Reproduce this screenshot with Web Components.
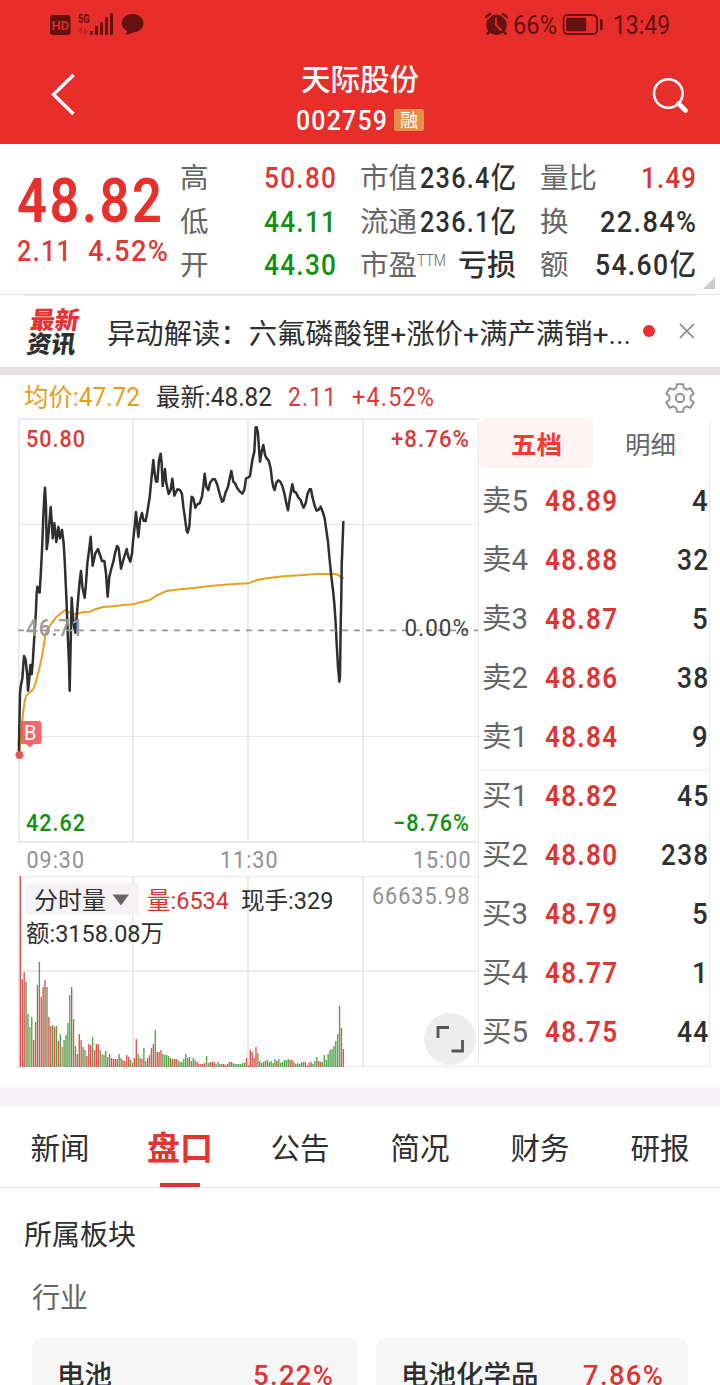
<!DOCTYPE html>
<html lang="zh-CN">
<head>
<meta charset="utf-8">
<title>天际股份 002759</title>
<style>
html,body{
    margin:0;
    background:#FFF;
}
body{
    width:720px;
    height:1385px;
    overflow:hidden;
    color:#2F2F2F;
    font-family: Roboto, "Noto Sans CJK SC", sans-serif;
}
</style>
</head>
<body>
<stock-page></stock-page>

<script>
// every element gets its own open shadow root
class BaseElement extends HTMLElement{
    constructor(){
        super();
        this.attachShadow({mode:'open'});
    }
    connectedCallback(){
        this.shadowRoot.innerHTML = this.render();
    }
}

class StatusBar extends BaseElement{
    render(){
        return `
<style>
:host{
    display:flex;
    justify-content:space-between;
    align-items:center;
    height:48px;
    padding:0 50px;
    color:#641210;
    font-size:25px;
    font-weight:400;
    box-sizing:border-box;
}
.side{
    display:flex;
    align-items:center;
}
svg{
    display:block;
}
text{
    font-family:Roboto, sans-serif;
}
.time{
    margin-left:10px;
}
fit-text{
    margin-top:2px;
}
</style>
<div class="side">
    <svg width="96" height="28" viewBox="50 10 96 28">
        <rect x="50" y="15" width="20.5" height="20" rx="3" fill="#641210"/>
        <text x="51.800" y="30" font-size="13.5" font-weight="500" fill="#E72E2B" textLength="17" lengthAdjust="spacingAndGlyphs">HD</text>
        <text x="78" y="22.6" font-size="13" font-weight="700" fill="#641210" textLength="11.5" lengthAdjust="spacingAndGlyphs">5G</text>
        <g fill="#641210">
            <rect x="90" y="31" width="3" height="4" rx="1"/>
            <rect x="95" y="26" width="3" height="9" rx="1"/>
            <rect x="100" y="22" width="3" height="13" rx="1"/>
            <rect x="105" y="17" width="3" height="18" rx="1"/>
            <rect x="110" y="13" width="3" height="22" rx="1"/>
            <path d="M132.500 14c6 0 11 4 11 9.200 0 5-4.500 8.800-10.500 9-2 1.500-4.500 2.200-7.800 2 1.200-.9 1.800-2 1.900-3.200-3.300-1.600-5.500-4.500-5.500-7.800 0-5.200 5-9.200 10.900-9.200z"/>
        </g>
        <path d="M81.500 34v-6l-3 3.200M85 28v6l3-3.200" fill="none" stroke="#641210" stroke-opacity=".35" stroke-width="1.600"/>
    </svg>
</div>
<div class="side">
    <svg width="30" height="28" viewBox="483 10 30 28">
        <circle cx="496.500" cy="24.700" r="10.300" fill="#641210"/>
        <path d="M486 17.500l4-3.500M507 17.500l-4-3.500" stroke="#E72E2B" stroke-width="5.500"/>
        <path d="M486 17l4-3M507 17l-4-3" stroke="#641210" stroke-width="2.600" stroke-linecap="round"/>
        <path d="M490 31l-2.500 2.500M503 31l2.500 2.500" stroke="#641210" stroke-width="2.600" stroke-linecap="round"/>
        <path d="M496 18.500v6.500l5 5" fill="none" stroke="#E72E2B" stroke-width="1.800" stroke-linecap="round"/>
    </svg>
    <fit-text w="44">66%</fit-text>
    <svg width="46" height="28" viewBox="557.500 10 46 28">
        <rect x="564" y="15" width="33.500" height="19" rx="4" fill="none" stroke="#641210" stroke-width="1.800"/>
        <rect x="566.700" y="17.700" width="20" height="13.600" rx="1.500" fill="#641210"/>
        <rect x="600.500" y="19" width="2.700" height="11" rx="1.300" fill="#641210"/>
    </svg>
    <fit-text class="time" w="57">13:49</fit-text>
</div>
`;
    }
}
customElements.define('status-bar',StatusBar);

class TitleBar extends BaseElement{
    render(){
        return `
<style>
:host{
    display:grid;
    grid-template-columns:120px 1fr 120px;
    height:96px;
    color:#FFF;
}
.name{
    margin-top:13px;
    height:38px;
    line-height:38px;
    text-align:center;
    font-size:29.5px;
    font-weight:500;
}
.code{
    display:flex;
    align-items:center;
    padding-left:176px;
    height:44px;
    margin-top:-1px;
    font-size:28px;
    font-weight:500;
    line-height:44px;
}
.code fit-text{
    padding-top:2px;
}
.badge{
    width:30px;
    height:22px;
    margin-left:7px;
    border-radius:2px;
    background:#E78E48;
    font-size:18px;
    line-height:23px;
    font-weight:400;
    text-align:center;
}
svg{
    display:block;
}
</style>
<svg width="120" height="96" viewBox="0 48 120 96">
    <path d="M73.500 75L53.500 94.500L73.500 114" fill="none" stroke="#FFF" stroke-width="3.400"/>
</svg>
<div>
    <div class="name"><slot name="name"></slot></div>
    <div class="code"><fit-text w="91" spaced><slot name="code"></slot></fit-text><span class="badge"><slot name="badge"></slot></span></div>
</div>
<svg width="120" height="96" viewBox="600 48 120 96">
    <circle cx="668.300" cy="93.500" r="14.300" fill="none" stroke="#FFF" stroke-width="2.600"/>
    <path d="M678.500 103.500L685.500 110.500" stroke="#FFF" stroke-width="4.600" stroke-linecap="round"/>
</svg>
`;
    }
}
customElements.define('title-bar',TitleBar);

class QuoteItem extends BaseElement{
    render(){
        const color = this.getAttribute('color') || '#2F2F2F';
        const sup = this.getAttribute('sup') || '';
        return `
<style>
:host{
    display:flex;
    justify-content:space-between;
    align-items:center;
    height:43.5px;
    line-height:43.5px;
}
.label{
    color:#666;
    font-size:28.5px;
    margin-left:-1px;
}
.sup{
    display:inline-block;
    font-size:17px;
    font-weight:300;
    line-height:20px;
    vertical-align:9px;
}
.value{
    color:${color};
    font-size:29.5px;
    font-weight:500;
}
</style>
<span class="label">${this.getAttribute('label')}${sup ? `<fit-text class="sup" w="29">${sup}</fit-text>` : ''}</span>
<fit-text class="value" w="${this.getAttribute('w')}" ${this.hasAttribute('plain') ? '' : 'spaced'}><slot></slot></fit-text>
`;
    }
}
customElements.define('quote-item',QuoteItem);

class QuotePanel extends BaseElement{
    render(){
        return `
<style>
:host{
    display:grid;
    grid-template-columns:164px 155px 25px 155px 25px 155px;
    grid-auto-rows:43.5px;
    height:151px;
    padding:13px 0 0 17px;
    box-sizing:border-box;
    border-bottom:1px solid #E2E0E2;
    position:relative;
}
.now{
    grid-row:1 / 4;
    color:#E72F2C;
}
.price{
    height:88px;
    line-height:88px;
    font-size:61.5px;
    font-weight:600;
}
.change{
    display:flex;
    gap:17px;
    height:18px;
    line-height:12px;
    font-size:30px;
    font-weight:500;
    color:#DB3B38;
}
.c2{
    grid-column:4;
}
.c3{
    grid-column:6;
}
.corner{
    position:absolute;
    right:5px;
    bottom:5px;
    width:12px;
    height:12px;
    background:#CCC;
    clip-path:polygon(100% 0,100% 100%,0 100%);
}
</style>
<div class="now">
    <div class="price"><fit-text w="145" spaced>48.82</fit-text></div>
    <div class="change"><fit-text w="54" spaced>2.11</fit-text><fit-text w="80" spaced>4.52%</fit-text></div>
</div>
<quote-item label="高" w="72" color="#DB3B38">50.80</quote-item>
<quote-item class="c2" label="市值" w="96">236.4亿</quote-item>
<quote-item class="c3" label="量比" w="55" color="#DB3330">1.49</quote-item>
<quote-item label="低" w="72" color="#109010">44.11</quote-item>
<quote-item class="c2" label="流通" w="96">236.1亿</quote-item>
<quote-item class="c3" label="换" w="96">22.84%</quote-item>
<quote-item label="开" w="72" color="#109010">44.30</quote-item>
<quote-item class="c2" label="市盈" sup="TTM" w="58" plain>亏损</quote-item>
<quote-item class="c3" label="额" w="101">54.60亿</quote-item>
<div class="corner"></div>
`;
    }
}
customElements.define('quote-panel',QuotePanel);

class NewsRow extends BaseElement{
    render(){
        return `
<style>
:host{
    display:flex;
    align-items:center;
    height:72px;
    box-sizing:border-box;
    padding:1px 24px 0;
    background:linear-gradient(#ECEAEC,#ECEAEC) 24px 0 / 672px 1px no-repeat;
}
.logo{
    width:51px;
    margin:-3px 0 0 5px;
    font-family:"Noto Sans CJK SC", sans-serif;
    font-size:24.5px;
    font-weight:900;
    line-height:23.5px;
    transform:skewX(-8deg);
}
.logo .top{
    color:#E33431;
}
.text{
    margin:6px 0 0 28px;
    font-size:28px;
    line-height:40px;
}
.dot{
    width:12px;
    height:12px;
    margin:-1px 0 0 12px;
    border-radius:50%;
    background:#EB2F2F;
}
svg{
    margin:-1px 0 0 23px;
}
</style>
<div class="logo"><div class="top">最新</div><div>资讯</div></div>
<div class="text"><fit-text w="524"><slot></slot></fit-text></div>
<div class="dot"></div>
<svg width="18" height="18" viewBox="0 0 18 18"><path d="M2 2L16 16M16 2L2 16" stroke="#8E8E8E" stroke-width="1.700"/></svg>
`;
    }
}
customElements.define('news-row',NewsRow);

class InfoRow extends BaseElement{
    gear(){
        let pts = [];
        for(let k=0;k<6;k++){
            [[-20,10.8],[-13,14.3],[13,14.3],[20,10.8]].forEach(([a,r])=>{
                const t = (k*60 + a - 90) * Math.PI / 180;
                pts.push((16 + r*Math.cos(t)).toFixed(1) + ',' + (16 + r*Math.sin(t)).toFixed(1));
            });
        }
        return pts.join(' ');
    }
    render(){
        return `
<style>
:host{
    display:flex;
    align-items:center;
    height:43px;
    padding:2px 24px 0;
    box-sizing:border-box;
    font-size:25px;
    line-height:40px;
}
.avg{
    color:#E3A01C;
}
.last{
    margin-left:16px;
}
.red{
    color:#D93A38;
    margin-left:16px;
}
svg{
    margin-left:auto;
}
</style>
<fit-text class="avg" w="116">均价:47.72</fit-text>
<fit-text class="last" w="116">最新:48.82</fit-text>
<fit-text class="red" w="48" spaced>2.11</fit-text>
<fit-text class="red" w="82" spaced>+4.52%</fit-text>
<svg width="32" height="32" viewBox="0 0 32 32" fill="none" stroke="#919191" stroke-width="1.900" stroke-linejoin="round">
    <polygon points="${this.gear()}"/>
    <circle cx="16" cy="16" r="4.200"/>
</svg>
`;
    }
}
customElements.define('info-row',InfoRow);

// price line and average line, three units per pixel
const PRICE = '57,1034 57,1000 60,850 62,830 67,805 72,738 77,750 82,800 84,842 87,815 91,765 95,793 98,760 103,680 108,600 110,550 112,530 116,545 119,548 123,480 127,400 130,320 133,260 135,233 138,290 140,418 144,390 148,340 152,291 155,330 158,385 163,340 169,396 175,351 180,385 186,360 191,400 194,450 199,560 204,690 207,760 209,842 212,700 215,563 218,610 222,650 226,668 230,620 235,560 239,515 243,483 247,530 254,563 258,520 262,460 268,415 272,380 278,467 286,430 294,417 300,435 306,453 313,453 318,490 323,560 328,500 333,480 340,455 345,430 351,408 356,415 360,450 363,476 370,450 380,417 385,440 391,455 396,430 400,385 404,350 408,306 412,350 415,381 420,330 426,309 431,333 437,333 443,300 449,262 453,220 457,180 460,150 464,190 468,215 472,215 477,150 482,131 485,160 488,228 492,200 495,177 499,220 506,252 512,240 517,206 523,257 532,238 540,240 546,252 550,290 555,325 560,362 563,368 568,350 572,290 575,260 580,265 586,293 592,283 599,280 606,260 610,230 614,191 619,230 625,240 630,218 638,208 645,208 652,225 660,255 666,275 670,273 676,250 684,230 690,200 694,183 700,215 706,221 712,235 720,245 727,251 733,240 738,205 744,203 750,198 757,150 763,125 767,52 770,52 774,70 777,115 780,155 785,125 790,105 795,135 800,145 806,152 812,175 816,210 820,232 824,240 829,218 835,211 841,215 847,228 853,250 858,275 864,301 870,260 877,223 882,245 888,248 895,262 902,270 907,285 911,293 917,280 923,250 929,238 933,238 937,260 944,287 950,302 957,298 962,290 968,305 974,325 979,360 984,395 989,450 994,500 999,540 1003,580 1007,640 1010,700 1014,770 1018,815 1020,800 1022,650 1024,560 1025,470 1028,390 1030,336';
const AVERAGE = '57,1034 65,950 70,900 75,870 80,855 90,847 100,837 108,815 118,775 126,740 132,700 138,665 148,650 158,635 170,620 180,612 196,600 206,606 220,612 235,611 250,606 270,605 285,598 310,591 340,589 370,585 400,583 420,577 450,570 470,556 500,543 540,538 580,534 630,528 690,523 745,520 770,510 800,505 850,499 900,496 950,492 1005,492 1015,495 1022,502 1030,503';

class PriceChart extends BaseElement{
    render(){
        return `
<style>
:host{
    display:block;
    height:458px;
}
svg{
    display:block;
}
text{
    font-family:Roboto, sans-serif;
    font-size:23.5px;
    font-weight:500;
    letter-spacing:1.1px;
}
.axis text, .thin{
    font-weight:400;
}
</style>
<svg width="478" height="458" viewBox="0 418 478 458">
    <path d="M19 419V842M133 419V842M248 419V842M363 419V842M18 419H478M18 842H478" fill="none" stroke="#EBEBEB" stroke-width="2"/>
    <path d="M19 524.500H478M19 736.500H478" stroke="#E6E6E6" stroke-width="1"/>
    <g transform="translate(0 410) scale(.33333)" fill="none" stroke-linejoin="round" stroke-linecap="round">
        <polyline points="${AVERAGE}" stroke="#E6A020" stroke-width="6"/>
        <polyline points="${PRICE}" stroke="#2F2F2F" stroke-width="7.500"/>
    </g>
    <path d="M18 630.300H478" stroke="#999" stroke-width="1.800" stroke-dasharray="6 6"/>
    <text x="26" y="636" fill="#999" textLength="58" lengthAdjust="spacingAndGlyphs">46.71</text>
    <circle cx="19.500" cy="755" r="4" fill="#E15856"/>
    <path d="M22 721h17q2.500 0 2.500 2.500v18q0 2.500-2.500 2.500h-5l-4 3.500-4-3.500h-5v-23z" fill="#F0504E" fill-opacity=".85"/>
    <text x="24" y="740" fill="#FFF" style="font-size:20px;font-weight:400">B</text>
    <text x="26" y="447" fill="#D93A38" textLength="60" lengthAdjust="spacingAndGlyphs">50.80</text>
    <text x="391" y="447" fill="#D93A38" textLength="79" lengthAdjust="spacingAndGlyphs">+8.76%</text>
    <text class="thin" x="404.500" y="636" fill="#404040" textLength="65.500" lengthAdjust="spacingAndGlyphs">0.00%</text>
    <text x="26" y="831" fill="#109010" textLength="60" lengthAdjust="spacingAndGlyphs">42.62</text>
    <text x="393" y="831" fill="#109010" textLength="77" lengthAdjust="spacingAndGlyphs">−8.76%</text>
    <g class="axis" fill="#909090">
        <text x="26.500" y="868" textLength="58.500" lengthAdjust="spacingAndGlyphs">09:30</text>
        <text x="220" y="868" textLength="58.500" lengthAdjust="spacingAndGlyphs">11:30</text>
        <text x="413" y="868" textLength="58.500" lengthAdjust="spacingAndGlyphs">15:00</text>
    </g>
</svg>
`;
    }
}
customElements.define('price-chart',PriceChart);

// one entry per minute: colour and bar height
const VOLUME = 'r192 r88 r95 g85 g53 t40 g50 r27 r45 r82 g105 r70 r80 r87 g80 r50 r41 g42 r40 g41 r26 g33 t20 g27 g32 g44 g72 r80 g48 g21 r13 r33 r27 g20 g17 r11 r23 r22 g30 r17 r23 r23 g17 t13 g12 g16 g10 r13 r9 r8 r8 r8 g13 g9 r7 r6 r12 r10 g7 g4 r9 r28 g13 r9 r8 g19 g6 r9 r12 r19 r23 g37 r15 r15 r17 g13 g12 g12 g11 r9 g8 r8 r8 g7 g5 g5 g8 g13 g9 r10 g6 g9 g7 r5 r3 r3 r3 r4 g11 g4 r5 r5 r5 g3 g5 g3 r3 r3 r2 r3 r5 r5 g4 g3 g3 g3 g3 g4 g4 r9 r2 r17 r15 r9 r20 g14 g6 r4 r5 g6 g7 g5 g6 g4 g8 r6 g8 g4 g5 g7 g7 g8 r7 r7 g5 g3 g4 g3 g5 g5 r5 r2 r4 r5 g3 g6 g10 r6 r5 g5 g12 g7 g13 g17 g18 g21 g26 g33 g61 r39 r18';
const VOLUME_COLORS = {r:'#DD4F4F', g:'#4DA345', t:'#B98555'};

class VolumeChart extends BaseElement{
    bars(){
        return VOLUME.split(' ').map((v,i)=>{
            const h = Number(v.slice(1));
            return `<rect x="${(19.7 + i*1.9).toFixed(2)}" y="${1067 - h}" width="1.35" height="${h}" fill="${VOLUME_COLORS[v[0]]}"/>`;
        }).join('');
    }
    render(){
        return `
<style>
:host{
    display:block;
    height:192px;
}
svg{
    display:block;
}
text{
    font-family:Roboto, "Noto Sans CJK SC", sans-serif;
    font-size:23.5px;
    fill:#2F2F2F;
}
</style>
<svg width="478" height="192" viewBox="0 876 478 192">
    <path d="M19 876V1067M133 876V1067M248 876V1067M363 876V1067M18 876.500H478M18 971H478" fill="none" stroke="#EBEBEB" stroke-width="2"/>
    <path d="M18 1066.500H478" stroke="#E8E8E8"/>
    <rect x="26" y="883" width="113" height="32" rx="4" fill="#F5F1F5"/>
    ${this.bars()}
    <text x="34" y="908.500" textLength="72" lengthAdjust="spacingAndGlyphs">分时量</text>
    <path d="M112.500 894.500h16.500l-8 11z" fill="#666"/>
    <text x="147" y="908.500" style="fill:#DB3330" textLength="82" lengthAdjust="spacingAndGlyphs">量:6534</text>
    <text x="241" y="908.500" textLength="92.500" lengthAdjust="spacingAndGlyphs">现手:329</text>
    <text x="372" y="904" style="fill:#909090;letter-spacing:1.1px" textLength="98.500" lengthAdjust="spacingAndGlyphs">66635.98</text>
    <text x="26" y="941.500" textLength="138" lengthAdjust="spacingAndGlyphs">额:3158.08万</text>
    <circle cx="450" cy="1039" r="26" fill="#EDEDED"/>
    <path d="M438 1038V1027.500H449M462.500 1040V1051H451.500" fill="none" stroke="#555" stroke-width="2.800"/>
</svg>
`;
    }
}
customElements.define('volume-chart',VolumeChart);

class OrderRow extends BaseElement{
    render(){
        const size = this.getAttribute('size');
        return `
<style>
:host{
    display:flex;
    align-items:center;
    height:59px;
    padding-top:2px;
    box-sizing:border-box;
    line-height:57px;
}
.label{
    width:63px;
    margin-left:-1px;
    color:#666;
    font-size:29px;
}
.price{
    color:#DB3633;
    font-size:29.5px;
    font-weight:600;
}
.size{
    margin-left:auto;
    padding-right:1px;
    font-size:29px;
    font-weight:500;
}
</style>
<div class="label"><fit-text w="46">${this.getAttribute('label')}</fit-text></div>
<fit-text class="price" w="72" spaced>${this.getAttribute('price')}</fit-text>
<fit-text class="size" w="${size.length * 15.7}" spaced>${size}</fit-text>
`;
    }
}
customElements.define('order-row',OrderRow);

class OrderBook extends BaseElement{
    render(){
        return `
<style>
:host{
    display:block;
    height:649px;
    width:232px;
    box-sizing:border-box;
    border-left:1px solid #EBEBEB;
    border-right:1px solid #EBEBEB;
    border-bottom:1px solid #EBEBEB;
}
.tabs{
    display:grid;
    grid-template-columns:115px 115px;
    height:53px;
    line-height:54px;
    text-align:center;
    font-size:25.5px;
    color:#666;
}
.active{
    height:50px;
    border-radius:7px;
    background:#FFF4F4;
    color:#F23A31;
    font-weight:700;
}
.tabs div + div{
    margin-left:-2px;
}
.rows{
    padding:0 0 0 4px;
}
hr{
    margin:3px 0 -5px -4px;
    border:0;
    height:2px;
    background:#F3F3F3;
}
</style>
<div class="tabs"><div class="active">五档</div><div>明细</div></div>
<div class="rows">
    <order-row label="卖5" price="48.89" size="4"></order-row>
    <order-row label="卖4" price="48.88" size="32"></order-row>
    <order-row label="卖3" price="48.87" size="5"></order-row>
    <order-row label="卖2" price="48.86" size="38"></order-row>
    <order-row label="卖1" price="48.84" size="9"></order-row>
    <hr>
    <order-row label="买1" price="48.82" size="45"></order-row>
    <order-row label="买2" price="48.80" size="238"></order-row>
    <order-row label="买3" price="48.79" size="5"></order-row>
    <order-row label="买4" price="48.77" size="1"></order-row>
    <order-row label="买5" price="48.75" size="44"></order-row>
</div>
`;
    }
}
customElements.define('order-book',OrderBook);

class PageTabs extends BaseElement{
    render(){
        return `
<style>
:host{
    display:grid;
    grid-template-columns:repeat(6,120px);
    height:81px;
    box-sizing:border-box;
    border-bottom:1px solid #E8E8E8;
}
div{
    display:flex;
    flex-direction:column;
    align-items:center;
    justify-content:space-between;
    font-size:29.5px;
    line-height:84px;
    height:80px;
}
.active{
    color:#E53531;
    font-size:33px;
    font-weight:700;
}
.active span{
    height:76px;
}
.active::after{
    content:"";
    width:40px;
    height:4px;
    background:#D63835;
}
</style>
<div>新闻</div><div class="active"><span>盘口</span></div><div>公告</div><div>简况</div><div>财务</div><div>研报</div>
`;
    }
}
customElements.define('page-tabs',PageTabs);

class SectorCard extends BaseElement{
    render(){
        return `
<style>
:host{
    display:flex;
    justify-content:space-between;
    height:72px;
    line-height:75px;
    box-sizing:border-box;
    padding:0 25px;
    border-radius:9px;
    background:#F6F6F6;
    font-size:27.5px;
    font-weight:500;
}
.rate{
    color:#DB3633;
}
</style>
<span><slot></slot></span>
<fit-text class="rate" w="80" spaced>${this.getAttribute('rate')}</fit-text>
`;
    }
}
customElements.define('sector-card',SectorCard);

class StockPage extends BaseElement{
    render(){
        return `
<style>
:host{
    display:block;
}
header{
    background:#E72E2B;
}
.market{
    display:grid;
    grid-template-columns:478px 232px;
    height:669px;
}
.band{
    height:8px;
    background:#E6E1E5;
}
.band.light{
    height:20px;
    background:#F7F3F7;
}
.title{
    padding:26px 24px 0;
    font-size:28px;
    line-height:44px;
}
.sub{
    padding:19px 32px 0;
    font-size:28px;
    line-height:44px;
    color:#666;
}
.cards{
    display:grid;
    grid-template-columns:326px 312px;
    gap:18px;
    padding:17px 32px 0;
}
</style>
<header>
    <status-bar></status-bar>
    <title-bar><span slot="name">天际股份</span><span slot="code">002759</span><span slot="badge">融</span></title-bar>
</header>
<quote-panel></quote-panel>
<news-row>异动解读：六氟磷酸锂+涨价+满产满销+...</news-row>
<div class="band"></div>
<info-row></info-row>
<div class="market">
    <div>
        <price-chart></price-chart>
        <volume-chart></volume-chart>
    </div>
    <order-book></order-book>
</div>
<div class="band light"></div>
<page-tabs></page-tabs>
<div class="title">所属板块</div>
<div class="sub">行业</div>
<div class="cards">
    <sector-card rate="5.22%">电池</sector-card>
    <sector-card rate="7.86%">电池化学品</sector-card>
</div>
`;
    }
}
customElements.define('stock-page',StockPage);

// squeezes or stretches its text to the width in "w",
// "spaced" opens up the digits first
// defined last, so that the fonts of its parents are already set
class FitText extends HTMLElement{
    constructor(){
        super();
        this.attachShadow({mode:'open'});
        this.shadowRoot.innerHTML = `
<style>
:host{
    display:inline-block;
    white-space:nowrap;
}
:host([spaced]){
    letter-spacing:.05em;
}
:host([spaced]) span{
    margin-right:-.05em;
}
span{
    display:inline-block;
    transform-origin:0 50%;
}
</style>
<span><slot></slot></span>
`;
    }
    connectedCallback(){
        const w = Number(this.getAttribute('w'));
        const span = this.shadowRoot.querySelector('span');
        let natural = span.getBoundingClientRect().width;
        if(this.hasAttribute('spaced')){
            // the space after the last digit does not count
            natural -= parseFloat(getComputedStyle(this).fontSize) * 0.05;
        }
        this.style.width = w + 'px';
        span.style.transform = 'scaleX(' + (w / natural) + ')';
    }
}
customElements.define('fit-text',FitText);
</script>
</body>
</html>
